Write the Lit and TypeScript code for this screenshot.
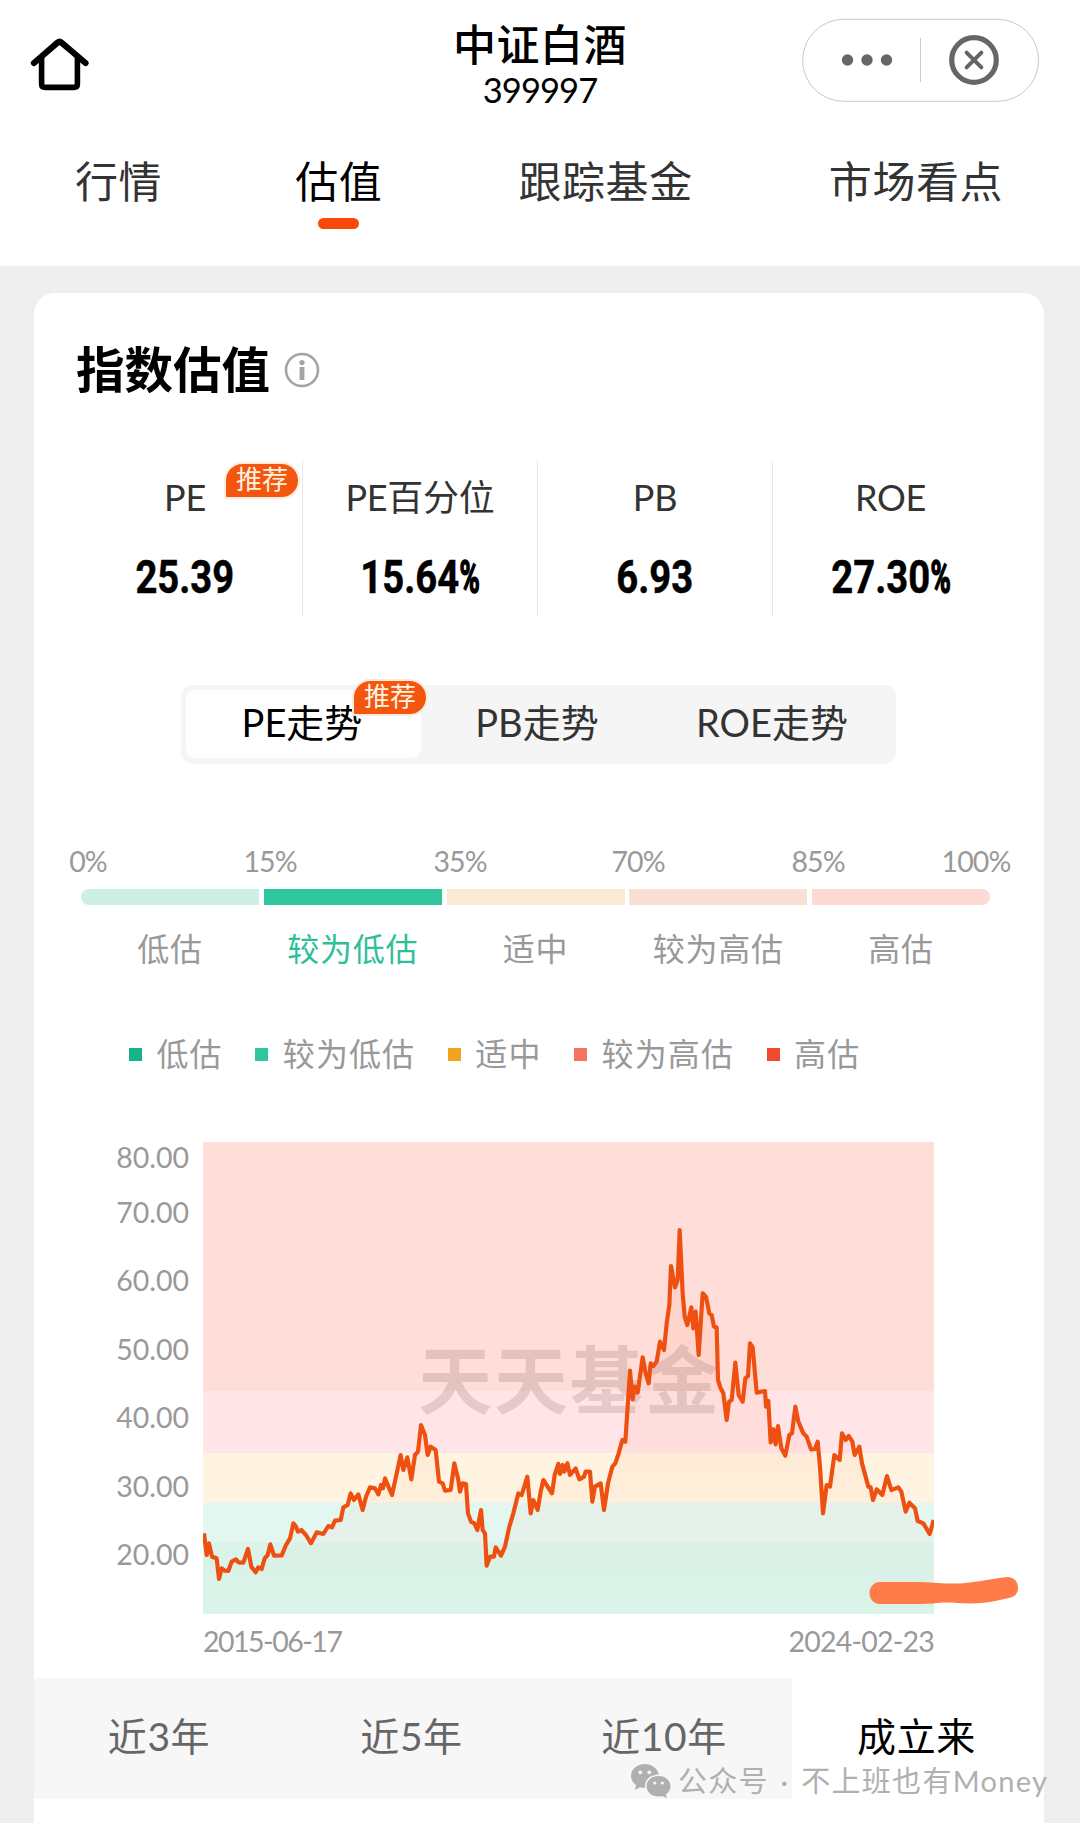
import { LitElement, html, css, svg } from "lit";
import { customElement, property } from "lit/decorators.js";

const TABS = [
  { label: "行情", cls: "t1" },
  { label: "估值", cls: "t2 active" },
  { label: "跟踪基金", cls: "t3" },
  { label: "市场看点", cls: "t4" },
];

const STATS = [
  { label: "PE", value: "25.39", pct: false, badge: true },
  { label: "PE百分位", value: "15.64", pct: true, badge: false },
  { label: "PB", value: "6.93", pct: false, badge: false },
  { label: "ROE", value: "27.30", pct: true, badge: false },
];

const TICKS = ["0%", "15%", "35%", "70%", "85%", "100%"];

const LEVELS = [
  { name: "低估", cls: "l1" },
  { name: "较为低估", cls: "l2" },
  { name: "适中", cls: "l3" },
  { name: "较为高估", cls: "l4" },
  { name: "高估", cls: "l5" },
];

const Y_LABELS = ["80.00", "70.00", "60.00", "50.00", "40.00", "30.00", "20.00"];

/* PE history polyline, in thirds of a pixel inside the plot area. */
const LINE =
  "3,1177 11,1242 18,1207 27,1247 41,1252 48,1314 56,1282 65,1289 76,1290 86,1262 99,1255 106,1264 121,1265 135,1224 145,1277 158,1294 166,1279 176,1284 185,1252 194,1242 202,1210 213,1244 236,1243 249,1212 261,1192 271,1147 279,1157 285,1172 295,1167 309,1182 324,1207 341,1174 361,1179 376,1155 387,1159 396,1139 413,1137 421,1099 434,1092 443,1057 453,1077 466,1060 479,1107 489,1067 501,1039 516,1042 526,1060 534,1032 540,1042 546,1012 567,1062 579,1007 593,942 601,987 613,949 625,1015 636,942 645,932 654,852 666,882 674,942 683,917 698,927 708,1022 719,1027 726,1049 743,1047 754,967 766,1017 771,1052 779,1027 789,1029 795,1117 804,1142 814,1147 823,1167 834,1107 839,1167 846,1177 851,1274 861,1247 873,1247 878,1219 894,1244 906,1217 919,1157 931,1117 946,1057 956,1062 973,1007 983,1117 991,1077 1004,1107 1013,1052 1021,1017 1047,1057 1055,1002 1066,969 1071,999 1079,972 1084,992 1093,967 1101,1002 1118,982 1129,1015 1143,1007 1148,992 1161,992 1168,1082 1176,1037 1193,1027 1203,1107 1215,1027 1228,977 1237,967 1247,937 1258,897 1267,902 1272,827 1281,689 1289,775 1295,737 1304,755 1319,649 1328,697 1337,727 1343,667 1351,675 1361,662 1371,602 1383,627 1391,547 1399,492 1404,375 1416,439 1424,417 1430,267 1439,457 1445,527 1453,552 1465,499 1471,562 1478,512 1487,642 1499,457 1509,467 1519,517 1526,522 1533,557 1541,559 1545,717 1553,742 1561,757 1571,837 1578,782 1586,777 1597,665 1607,762 1619,782 1627,712 1635,705 1641,607 1649,619 1661,755 1686,750 1689,797 1696,780 1703,904 1711,865 1718,910 1725,855 1735,922 1747,944 1759,882 1767,877 1777,797 1786,842 1801,877 1811,887 1824,925 1836,924 1844,902 1851,977 1860,1117 1871,1032 1881,1037 1894,942 1910,957 1917,877 1928,897 1937,885 1948,902 1955,942 1969,917 1977,967 1996,1037 2003,1039 2010,1077 2021,1045 2038,1062 2052,1005 2065,1047 2086,1039 2095,1052 2108,1112 2119,1085 2136,1102 2144,1140 2161,1147 2180,1179 2192,1137";

const BANDS = [
  { y: 0, h: 750, fill: "#ffddd8" },
  { y: 750, h: 187, fill: "#ffe5e8" },
  { y: 937, h: 147, fill: "#fff4e2" },
  { y: 1084, h: 122, fill: "#e4f6f0" },
  { y: 1206, h: 213, fill: "#daf4ea" },
];

@customElement("rec-badge")
export class RecBadge extends LitElement {
  static styles = css`
    :host {
      display: block;
      box-sizing: border-box;
      width: 76px;
      height: 37px;
      border: 2px solid #fdebdc;
      border-radius: 19px 19px 19px 3px;
      background: #f4560f;
      color: #fff3e0;
      font-size: 26px;
      line-height: 30px;
      text-align: center;
    }
  `;
  render() {
    return html`推荐`;
  }
}

@customElement("pe-chart")
export class PeChart extends LitElement {
  static styles = css`
    :host {
      display: grid;
      grid-template-columns: 155px 731px;
      column-gap: 14px;
      position: relative;
    }
    .axis {
      display: flex;
      flex-direction: column;
      align-items: flex-end;
      color: #999;
      font-size: 28.5px;
      line-height: 30px;
    }
    .axis span {
      margin-bottom: 38.4px;
    }
    .axis span:first-child {
      margin-bottom: 25px;
    }
    .plot {
      display: block;
      width: 731px;
      height: 472px;
    }
    .logo {
      font-family: "Noto Sans CJK SC", sans-serif;
      font-weight: 700;
      font-size: 222px;
    }
    .dates {
      grid-column: 2;
      display: flex;
      justify-content: space-between;
      margin-top: 12px;
      font-size: 28.5px;
      line-height: 30px;
      letter-spacing: -0.8px;
      color: #999;
    }
    .from {
      letter-spacing: -1.5px;
    }
    .brush {
      position: absolute;
      left: 832px;
      top: 429px;
      width: 156px;
      height: 38px;
    }
  `;
  render() {
    return html`
      <div class="axis">${Y_LABELS.map((l) => html`<span>${l}</span>`)}</div>
      <svg class="plot" viewBox="0 3 2193 1416">
        <defs>
          <linearGradient id="area" gradientUnits="userSpaceOnUse" x1="0" y1="267" x2="0" y2="1419">
            <stop offset="0" stop-color="#f4500f" stop-opacity="0.07" />
            <stop offset="0.6" stop-color="#f4500f" stop-opacity="0.05" />
            <stop offset="1" stop-color="#f4500f" stop-opacity="0" />
          </linearGradient>
        </defs>
        ${BANDS.map((b) => svg`<rect x="0" y=${b.y} width="2193" height=${b.h} fill=${b.fill}></rect>`)}
        <polygon points="3,1419 ${LINE} 2192,1419" fill="url(#area)" />
        <text class="logo" x="646" y="801" textLength="902" fill="#7a5f5f" fill-opacity="0.2">天天基金</text>
        <polyline points=${LINE} fill="none" stroke="#ee5011" stroke-width="12.5" stroke-linejoin="round" />
      </svg>
      <div class="dates"><span class="from">2015-06-17</span><span>2024-02-23</span></div>
      <svg class="brush" viewBox="866 1571 156 38">
        <path
          fill="#ff7b47"
          d="M880 1582H917C930 1582 938 1583.6 950 1583.6C975 1583.4 988 1579 1006 1577.2C1014 1576.4 1018 1582 1018 1588C1018 1594 1014 1597 1009 1598C996 1601 985 1603.6 970 1603.4C958 1603.2 950 1602 940 1602.8C930 1604 920 1604 912 1604H880C873 1604 869.5 1598 869.5 1593C869.5 1588 873 1582 880 1582Z"
        />
      </svg>
    `;
  }
}

@customElement("app-root")
export class AppRoot extends LitElement {
  @property() heading = "中证白酒";

  static styles = css`
    :host {
      display: block;
      position: relative;
      width: 1080px;
      height: 1823px;
      overflow: hidden;
      background: #efefef;
      color: #000;
      font-family: Lato, "Noto Sans CJK SC", sans-serif;
    }
    .top {
      height: 266px;
      background: #fff;
    }
    .bar {
      display: grid;
      grid-template-columns: 1fr auto 1fr;
      height: 120px;
    }
    .home {
      width: 64px;
      height: 60px;
      margin: 34px 0 0 28px;
    }
    .title {
      display: flex;
      flex-direction: column;
      align-items: center;
      padding-top: 20px;
    }
    .name {
      font-size: 43px;
      line-height: 50px;
      letter-spacing: 0.5px;
      font-weight: 500;
    }
    .code {
      font-size: 34.5px;
      line-height: 40px;
      letter-spacing: -0.9px;
    }
    .capsule {
      justify-self: end;
      width: 238px;
      height: 84px;
      margin: 18px 40px 0 0;
    }
    .tabs {
      display: flex;
      padding-left: 75px;
      font-size: 43px;
      line-height: 60px;
      letter-spacing: 0.6px;
      color: #333;
    }
    .tab {
      display: flex;
      flex-direction: column;
      align-items: center;
      height: 110px;
      padding-top: 32px;
      box-sizing: border-box;
    }
    .t2 {
      margin-left: 133px;
    }
    .t3 {
      margin-left: 136px;
    }
    .t4 {
      margin-left: 136px;
    }
    .active {
      color: #000;
    }
    .active::after {
      content: "";
      width: 41px;
      height: 11px;
      margin: 6px 1px 0 0;
      border-radius: 6px;
      background: #f9480a;
    }
    .card {
      box-sizing: border-box;
      width: 1010px;
      height: 1530px;
      margin: 27px 0 0 34px;
      border-radius: 21px 21px 0 0;
      background: #fff;
    }
    .heading {
      display: flex;
      align-items: center;
      gap: 14px;
      padding: 44px 0 0 42px;
      font-size: 48.5px;
      line-height: 64px;
      font-weight: 700;
    }
    .info {
      width: 36px;
      height: 36px;
      margin-top: 1px;
    }
    .stats {
      display: grid;
      grid-template-columns: repeat(4, 235px);
      margin: 60px 0 0 34px;
      height: 155px;
    }
    .stat {
      position: relative;
      display: flex;
      flex-direction: column;
      align-items: center;
      box-sizing: border-box;
      border-right: 1px solid #e6e6e6;
      padding-top: 12px;
    }
    .stat:last-child {
      border-right: none;
    }
    .label {
      font-size: 36px;
      line-height: 48px;
      letter-spacing: -0.3px;
      color: #333;
    }
    .value {
      display: flex;
      margin-top: 29px;
      font-family: Roboto, "Liberation Sans", sans-serif;
      font-weight: 700;
      font-size: 45.5px;
      line-height: 56px;
      transform: scaleX(0.84);
      -webkit-text-stroke: 0.5px #000;
    }
    .pct {
      width: 24px;
      transform: scaleX(0.72);
      transform-origin: 0 50%;
      -webkit-text-stroke: 1.6px #000;
    }
    .stat rec-badge {
      position: absolute;
      left: 156px;
      top: 1px;
    }
    .seg {
      display: grid;
      grid-template-columns: repeat(3, 235px);
      box-sizing: border-box;
      width: 715px;
      height: 79px;
      margin: 69px 0 0 147px;
      padding: 5px;
      border-radius: 12px;
      background: #f5f5f5;
      font-size: 38px;
      line-height: 64px;
      text-align: center;
      color: #333;
    }
    .opt {
      position: relative;
      height: 68px;
      box-sizing: border-box;
      padding-right: 3px;
      border-radius: 9px;
    }
    .on {
      background: #fff;
      color: #000;
    }
    .opt rec-badge {
      position: absolute;
      left: 166px;
      top: -11px;
    }
    .ticks {
      display: flex;
      margin: 82px 0 0 19px;
      font-size: 28.5px;
      line-height: 30px;
      letter-spacing: -0.9px;
      color: #999;
    }
    .tick {
      width: 70px;
      text-align: center;
    }
    .tick:nth-child(2) {
      margin-left: 112px;
    }
    .tick:nth-child(3) {
      margin-left: 120px;
    }
    .tick:nth-child(4) {
      margin-left: 108px;
    }
    .tick:nth-child(5) {
      margin-left: 110px;
    }
    .tick:nth-child(6) {
      margin-left: 88px;
    }
    .levels {
      display: grid;
      grid-template-columns: repeat(5, 178px);
      column-gap: 4.75px;
      margin: 13px 0 0 47px;
    }
    .level {
      text-align: center;
      font-size: 32px;
      line-height: 48px;
      letter-spacing: 0.7px;
      color: #999;
    }
    .level::before {
      content: "";
      display: block;
      height: 16px;
      margin-bottom: 20px;
      background: var(--tone);
    }
    .level.l1 {
      --tone: #cdf0e5;
    }
    .level.l2 {
      --tone: #2fc69d;
      color: #2fbf98;
    }
    .level.l3 {
      --tone: #faebd2;
    }
    .level.l4 {
      --tone: #fadfd2;
    }
    .level.l5 {
      --tone: #fedad5;
    }
    .level.l1::before {
      border-radius: 8px 0 0 8px;
    }
    .level.l5::before {
      border-radius: 0 8px 8px 0;
    }
    .legend {
      display: flex;
      gap: 34.6px;
      margin: 57px 0 0 95px;
      font-size: 32px;
      line-height: 48px;
      letter-spacing: 1.1px;
      color: #999;
    }
    .key {
      display: flex;
      align-items: center;
      gap: 14.5px;
      margin-right: -2px;
    }
    .key::before {
      content: "";
      width: 13px;
      height: 13px;
      background: var(--dot);
    }
    .key.l1 {
      --dot: #15b388;
    }
    .key.l2 {
      --dot: #2fc69d;
    }
    .key.l3 {
      --dot: #f2a41f;
    }
    .key.l4 {
      --dot: #f47462;
    }
    .key.l5 {
      --dot: #f2492f;
    }
    pe-chart {
      margin-top: 64px;
    }
    .ranges {
      display: grid;
      grid-template-columns: 253px 252px 253px 252px;
      margin-top: 22px;
      height: 121px;
      font-size: 39px;
      line-height: 117px;
      text-align: center;
      color: #666;
    }
    .range {
      box-sizing: border-box;
      padding-right: 3px;
      background: #f7f7f7;
      letter-spacing: 0.6px;
    }
    .range.cur {
      background: #fff;
      color: #000;
    }
    .mark {
      position: absolute;
      left: 630px;
      top: 1759px;
      display: flex;
      align-items: center;
      gap: 7px;
      color: #b0b0b0;
      font-size: 29px;
      line-height: 44px;
      white-space: pre;
    }
    .mark svg {
      width: 41px;
      height: 36px;
    }
    .author {
      letter-spacing: 1.3px;
      word-spacing: 3px;
    }
  `;

  render() {
    return html`
      <div class="top">
        <div class="bar">
          <svg class="home" viewBox="28 34 64 60" fill="none" stroke="#000" stroke-linecap="round" stroke-linejoin="round">
            <path d="M34 63L57.5 42.6Q59.5 40.8 61.5 42.6L85.5 63" stroke-width="6.2" />
            <path d="M41.6 58V84Q41.6 87.4 45.2 87.4H73.8Q77.4 87.4 77.4 84V58" stroke-width="5.6" />
          </svg>
          <div class="title">
            <div class="name">${this.heading}</div>
            <div class="code">399997</div>
          </div>
          <svg class="capsule" viewBox="802 18 238 84">
            <rect x="802.6" y="19.3" width="236" height="82" rx="41" fill="#fff" stroke="#c8c8c8" />
            <g fill="#666">
              <circle cx="847.5" cy="60" r="5.7" />
              <circle cx="867" cy="60" r="5.7" />
              <circle cx="886.5" cy="60" r="5.7" />
            </g>
            <path d="M920.5 38V82" stroke="#ccc" />
            <circle cx="974" cy="60" r="22.3" fill="none" stroke="#666" stroke-width="5.2" />
            <path d="M966.6 52.6L981.4 67.4M981.4 52.6L966.6 67.4" stroke="#666" stroke-width="4" stroke-linecap="round" />
          </svg>
        </div>
        <div class="tabs">${TABS.map((t) => html`<div class="tab ${t.cls}">${t.label}</div>`)}</div>
      </div>

      <div class="card">
        <div class="heading">
          <span>指数估值</span>
          <svg class="info" viewBox="0 0 36 36">
            <circle cx="18" cy="18" r="16" fill="none" stroke="#a3a3a3" stroke-width="2.6" />
            <circle cx="18" cy="10.6" r="2.6" fill="#a3a3a3" />
            <rect x="15.6" y="15" width="4.8" height="13" fill="#a3a3a3" />
          </svg>
        </div>

        <div class="stats">
          ${STATS.map(
            (s) => html`<div class="stat">
              <div class="label">${s.label}</div>
              <div class="value"><span>${s.value}</span>${s.pct ? html`<span class="pct">%</span>` : ""}</div>
              ${s.badge ? html`<rec-badge></rec-badge>` : ""}
            </div>`
          )}
        </div>

        <div class="seg">
          <div class="opt on">PE走势<rec-badge></rec-badge></div>
          <div class="opt">PB走势</div>
          <div class="opt">ROE走势</div>
        </div>

        <div class="ticks">${TICKS.map((t) => html`<span class="tick">${t}</span>`)}</div>
        <div class="levels">${LEVELS.map((l) => html`<div class="level ${l.cls}">${l.name}</div>`)}</div>
        <div class="legend">${LEVELS.map((l) => html`<div class="key ${l.cls}">${l.name}</div>`)}</div>

        <pe-chart></pe-chart>

        <div class="ranges">
          <div class="range">近3年</div>
          <div class="range">近5年</div>
          <div class="range">近10年</div>
          <div class="range cur">成立来</div>
        </div>
      </div>

      <div class="mark">
        <svg viewBox="0 0 41 36">
          <path
            fill="#b0b0b0"
            d="M15 1C7 1 1 6.4 1 13c0 3.800 2 7 5.200 9.200L4.800 27l5.400-2.800c1.600.4 3.200.7 4.900.7C14 17 20 11.500 28.800 11.400 27.500 5.400 21.800 1 15 1Z"
          />
          <path
            fill="#b0b0b0"
            d="M28.500 13C21.500 13 16.500 17.700 16.500 23.300c0 5.700 5 10.300 12 10.300 1.500 0 2.900-.2 4.200-.6L37 35.500l-1.100-4C38.800 29.500 40.500 26.600 40.500 23.300 40.500 17.700 35.500 13 28.500 13Z"
          />
          <g fill="#f7f7f7">
            <circle cx="10.300" cy="9.300" r="1.900" />
            <circle cx="19.300" cy="9.300" r="1.900" />
            <circle cx="24.700" cy="20" r="1.600" />
            <circle cx="32.300" cy="20" r="1.600" />
          </g>
        </svg>
        <span class="author">公众号 · 不上班也有Money</span>
      </div>
    `;
  }
}
